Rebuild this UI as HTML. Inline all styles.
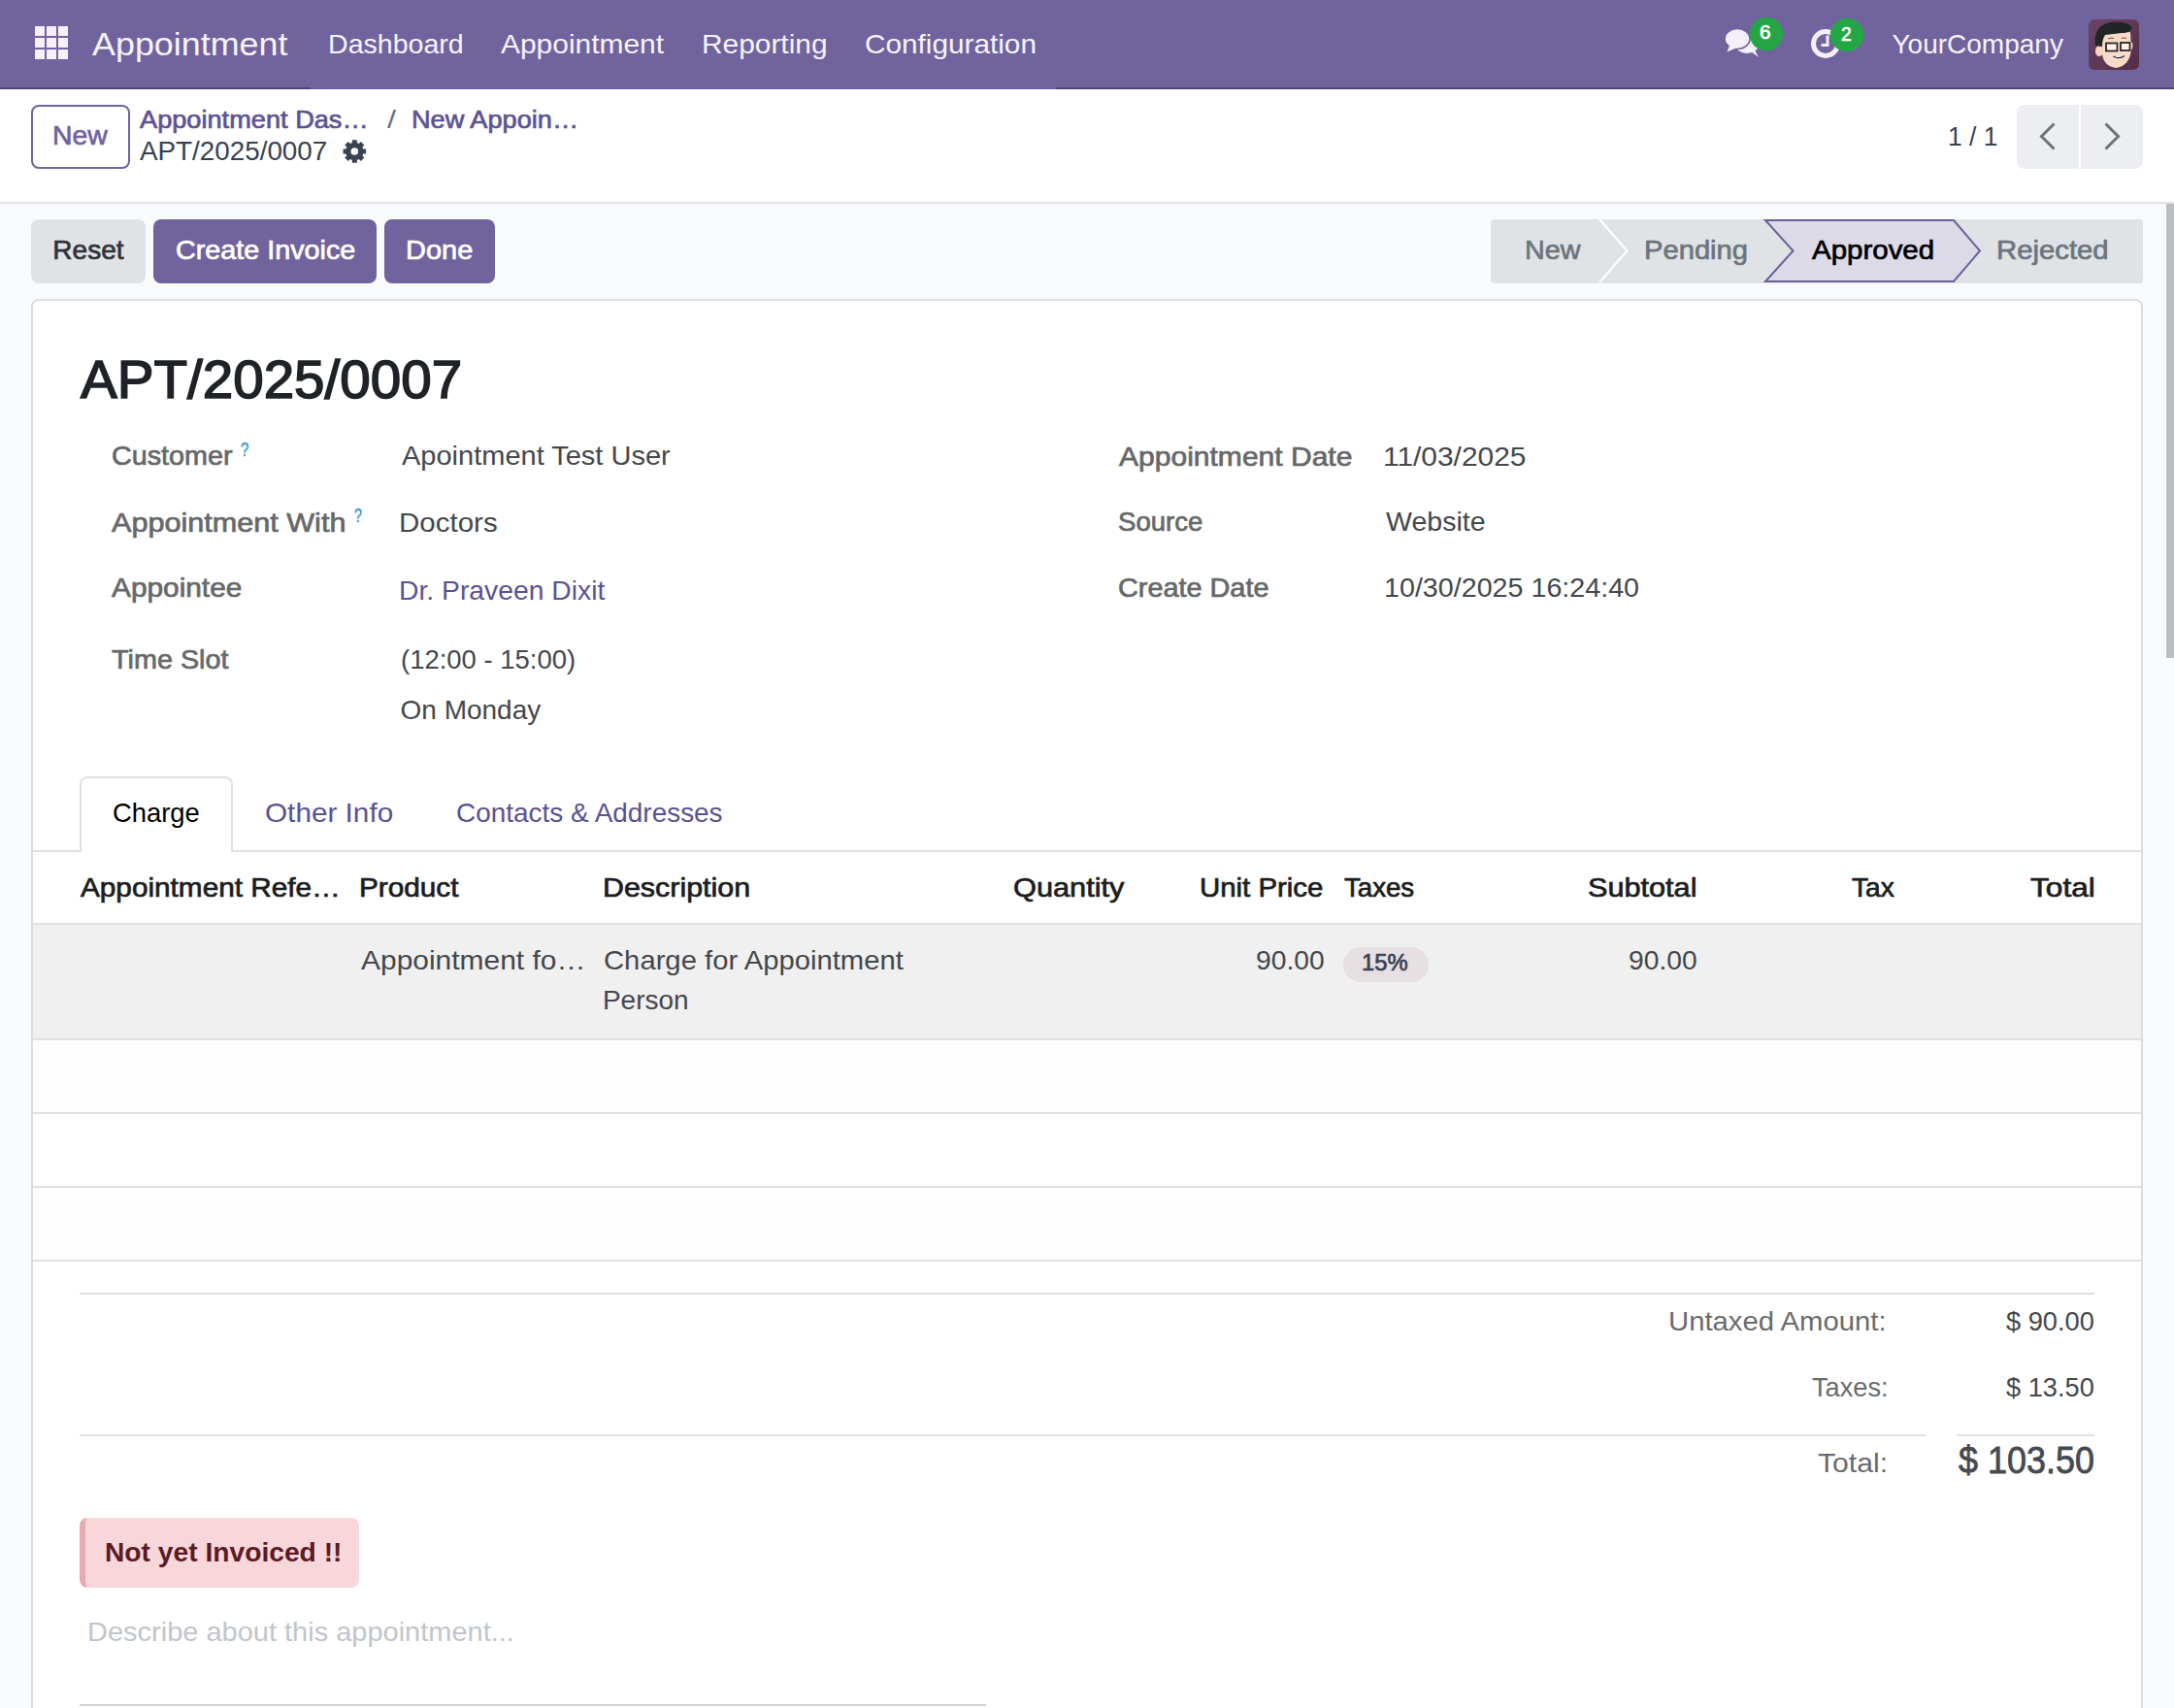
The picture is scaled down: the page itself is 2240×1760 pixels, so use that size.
<!DOCTYPE html>
<html><head><meta charset="utf-8"><title>Appointment</title>
<style>
html,body{margin:0;padding:0;}
body{width:2240px;height:1760px;overflow:hidden;position:relative;background:#f9fafb;font-family:"Liberation Sans",sans-serif;}
.a{position:absolute;box-sizing:border-box;}
@media (max-width:1300px){body{zoom:0.5;}}
.t{position:absolute;white-space:nowrap;line-height:1;transform-origin:0 0;}
</style></head><body>
<!-- navbar -->
<div class="a" style="left:0;top:0;width:2240px;height:92px;background:#71639e;"></div>
<div class="a" style="left:0;top:90px;width:320px;height:2px;background:#4f4670;"></div>
<div class="a" style="left:1088px;top:90px;width:1152px;height:2px;background:#4f4670;"></div>
<!-- control panel -->
<div class="a" style="left:0;top:92px;width:2240px;height:116px;background:#ffffff;"></div>
<div class="a" style="left:0;top:208px;width:2240px;height:2px;background:#e1e3e6;"></div>
<div class="a" style="left:32px;top:108px;width:102px;height:66px;border:2px solid #71639e;border-radius:8px;background:#fff;"></div>
<div class="a" style="left:2078px;top:108px;width:64px;height:66px;background:#eceef1;border-radius:8px 0 0 8px;"></div>
<div class="a" style="left:2144px;top:108px;width:64px;height:66px;background:#eceef1;border-radius:0 8px 8px 0;"></div>
<!-- action buttons -->
<div class="a" style="left:32px;top:226px;width:118px;height:66px;background:#e0e3e6;border-radius:8px;"></div>
<div class="a" style="left:158px;top:226px;width:230px;height:66px;background:#71639e;border-radius:8px;"></div>
<div class="a" style="left:396px;top:226px;width:114px;height:66px;background:#71639e;border-radius:8px;"></div>
<!-- statusbar -->
<div class="a" style="left:1536px;top:226px;width:672px;height:66px;background:#e0e3e6;border-radius:4px;"></div>
<!-- scrollbar -->
<div class="a" style="left:2232px;top:210px;width:8px;height:468px;background:#bdbec0;"></div>
<!-- sheet -->
<div class="a" style="left:32px;top:308px;width:2176px;height:1500px;background:#fff;border:2px solid #dcdddf;border-radius:8px;"></div>
<!-- tabs -->
<div class="a" style="left:34px;top:876px;width:2172px;height:2px;background:#dfe0e2;"></div>
<div class="a" style="left:82px;top:800px;width:158px;height:78px;border:2px solid #dfe0e2;border-bottom:none;border-radius:8px 8px 0 0;background:#fff;"></div>
<!-- table -->
<div class="a" style="left:34px;top:951px;width:2172px;height:2px;background:#dfe0e2;"></div>
<div class="a" style="left:34px;top:953px;width:2172px;height:117px;background:#f0f0f1;"></div>
<div class="a" style="left:34px;top:1070px;width:2172px;height:2px;background:#dfe0e2;"></div>
<div class="a" style="left:34px;top:1072px;width:2172px;height:74px;background:#fdfdfe;"></div>
<div class="a" style="left:34px;top:1146px;width:2172px;height:2px;background:#dfe0e2;"></div>
<div class="a" style="left:34px;top:1222px;width:2172px;height:2px;background:#dfe0e2;"></div>
<div class="a" style="left:34px;top:1224px;width:2172px;height:74px;background:#fdfdfe;"></div>
<div class="a" style="left:34px;top:1298px;width:2172px;height:2px;background:#dfe0e2;"></div>
<!-- tax pill -->
<div class="a" style="left:1384px;top:976px;width:88px;height:36px;background:#e6e0e2;border-radius:18px;"></div>
<!-- totals -->
<div class="a" style="left:82px;top:1332px;width:2076px;height:2px;background:#dfe0e2;"></div>
<div class="a" style="left:82px;top:1478px;width:1902px;height:2px;background:#dfe0e2;"></div>
<div class="a" style="left:2016px;top:1478px;width:142px;height:2px;background:#dfe0e2;"></div>
<!-- alert -->
<div class="a" style="left:82px;top:1564px;width:288px;height:72px;background:#f8d7da;border-radius:8px;border-left:6px solid #e9a9b0;"></div>
<div class="a" style="left:82px;top:1756px;width:934px;height:2px;background:#cfd1d4;"></div>
<svg class="a" style="left:0;top:0;" width="2240" height="1760" viewBox="0 0 2240 1760"><rect x="36" y="27" width="10" height="10" fill="#f4f1fa"/><rect x="36" y="39" width="10" height="10" fill="#f4f1fa"/><rect x="36" y="51" width="10" height="10" fill="#f4f1fa"/><rect x="48" y="27" width="10" height="10" fill="#f4f1fa"/><rect x="48" y="39" width="10" height="10" fill="#f4f1fa"/><rect x="48" y="51" width="10" height="10" fill="#f4f1fa"/><rect x="60" y="27" width="10" height="10" fill="#f4f1fa"/><rect x="60" y="39" width="10" height="10" fill="#f4f1fa"/><rect x="60" y="51" width="10" height="10" fill="#f4f1fa"/><path d="M362.80,147.15 L362.80,144.26 L367.80,144.26 L367.80,147.15 L368.32,147.31 L368.82,147.50 L369.31,147.72 L369.79,147.97 L371.83,145.93 L375.37,149.47 L373.33,151.51 L373.58,151.99 L373.80,152.48 L373.99,152.98 L374.15,153.50 L377.04,153.50 L377.04,158.50 L374.15,158.50 L373.99,159.02 L373.80,159.52 L373.58,160.01 L373.33,160.49 L375.37,162.53 L371.83,166.07 L369.79,164.03 L369.31,164.28 L368.82,164.50 L368.32,164.69 L367.80,164.85 L367.80,167.74 L362.80,167.74 L362.80,164.85 L362.28,164.69 L361.78,164.50 L361.29,164.28 L360.81,164.03 L358.77,166.07 L355.23,162.53 L357.27,160.49 L357.02,160.01 L356.80,159.52 L356.61,159.02 L356.45,158.50 L353.56,158.50 L353.56,153.50 L356.45,153.50 L356.61,152.98 L356.80,152.48 L357.02,151.99 L357.27,151.51 L355.23,149.47 L358.77,145.93 L360.81,147.97 L361.29,147.72 L361.78,147.50 L362.28,147.31 Z M369.1,156 A3.8,3.8 0 1,0 361.5,156 A3.8,3.8 0 1,0 369.1,156 Z" fill="#3b4250" fill-rule="evenodd"/><polyline points="2116.5,127.5 2103.5,140.5 2116.5,153.5" fill="none" stroke="#6f7378" stroke-width="3"/><polyline points="2169.5,127.5 2182.5,140.5 2169.5,153.5" fill="none" stroke="#6f7378" stroke-width="3"/><polyline points="1648,226 1676.5,258.5 1648,291" fill="none" stroke="#ffffff" stroke-width="2"/><polygon points="1819,227 2013,227 2040,258.5 2013,290 1819,290 1847.5,258.5" fill="#dddae8" stroke="#6b5f9a" stroke-width="2"/><ellipse cx="1800" cy="46" rx="12" ry="9" fill="#f3f0f8"/><polygon points="1800,50 1812,59 1806,48" fill="#f3f0f8"/><ellipse cx="1790" cy="40" rx="13" ry="10.5" fill="#f3f0f8" stroke="#71639e" stroke-width="1.6"/><polygon points="1782,47 1779.5,53.5 1790,49" fill="#f3f0f8"/><circle cx="1819.8" cy="35" r="17.3" fill="#24a646"/><circle cx="1881" cy="45" r="12.5" fill="none" stroke="#f3f0f8" stroke-width="5"/><path d="M1883,36.5 L1883,46.5 L1876.5,46.5" fill="none" stroke="#f3f0f8" stroke-width="3"/><circle cx="1903" cy="36" r="17.3" fill="#24a646"/><defs><linearGradient id="avg" x1="0" y1="0" x2="1" y2="1"><stop offset="0" stop-color="#6b4567"/><stop offset="1" stop-color="#552c47"/></linearGradient></defs><rect x="2152" y="20" width="52" height="52" rx="6" fill="url(#avg)"/><ellipse cx="2163" cy="52.5" rx="4" ry="5.5" fill="#f6d6c2"/><ellipse cx="2195.5" cy="47" rx="2" ry="4" fill="#f6d6c2"/><path d="M2165,35 L2195,33 L2196,50 Q2195,67 2181,70 Q2168,69 2166,56 Z" fill="#f8dbc8"/><path d="M2159,47 Q2156,27 2174,23 Q2190,21 2197,28 Q2195,34 2186,34 L2169,36 Q2166,41 2166,48 Z" fill="#222526"/><rect x="2170" y="44.5" width="11.5" height="8" fill="#fff5ee" stroke="#2a2623" stroke-width="1.8"/><rect x="2185" y="44" width="9.5" height="8" fill="#fff5ee" stroke="#2a2623" stroke-width="1.8"/><path d="M2172,40 Q2175,38.5 2178,39.5 M2186,39.5 Q2189,38.5 2191,39.5" fill="none" stroke="#6b4a3a" stroke-width="1"/><path d="M2177.5,58 Q2183,61.5 2189,57.5" fill="#ffffff" stroke="#2a2623" stroke-width="1.3"/></svg>
<div class="t" style="left:95.00px;top:27.92px;font-size:34px;color:#f6f4fa;transform:scaleX(1.0551);">Appointment</div>
<div class="t" style="left:337.56px;top:31.90px;font-size:28px;color:#f6f4fa;transform:scaleX(1.0202);">Dashboard</div>
<div class="t" style="left:516.20px;top:31.90px;font-size:28px;color:#f6f4fa;transform:scaleX(1.0690);">Appointment</div>
<div class="t" style="left:723.27px;top:31.90px;font-size:28px;color:#f6f4fa;transform:scaleX(1.0668);">Reporting</div>
<div class="t" style="left:891.24px;top:31.90px;font-size:28px;color:#f6f4fa;transform:scaleX(1.0623);">Configuration</div>
<div class="t" style="left:1949.50px;top:32.30px;font-size:28px;color:#f6f4fa;">YourCompany</div>
<div class="t" style="left:54.12px;top:126.10px;font-size:28px;color:#71639e;transform:scaleX(1.0129);-webkit-text-stroke:0.7px #71639e;">New</div>
<div class="t" style="left:144.05px;top:109.99px;font-size:26px;color:#5e5394;transform:scaleX(1.0452);-webkit-text-stroke:0.7px #5e5394;">Appointment Das…</div>
<div class="t" style="left:399.00px;top:109.99px;font-size:26px;color:#6b7280;transform:scaleX(1.2500);">/</div>
<div class="t" style="left:424.26px;top:109.99px;font-size:26px;color:#5e5394;transform:scaleX(1.0441);-webkit-text-stroke:0.7px #5e5394;">New Appoin…</div>
<div class="t" style="left:143.70px;top:142.10px;font-size:28px;color:#374151;transform:scaleX(0.9932);">APT/2025/0007</div>
<div class="t" style="left:2007.11px;top:126.60px;font-size:28px;color:#374151;transform:scaleX(0.9439);">1 / 1</div>
<div class="t" style="left:54.35px;top:244.10px;font-size:28px;color:#2f3337;-webkit-text-stroke:0.7px #2f3337;">Reset</div>
<div class="t" style="left:180.92px;top:244.30px;font-size:28px;color:#ffffff;transform:scaleX(1.0265);-webkit-text-stroke:0.7px #ffffff;">Create Invoice</div>
<div class="t" style="left:417.98px;top:244.30px;font-size:28px;color:#ffffff;transform:scaleX(1.0347);-webkit-text-stroke:0.7px #ffffff;">Done</div>
<div class="t" style="left:1571.29px;top:244.30px;font-size:28px;color:#6c757d;transform:scaleX(1.0275);-webkit-text-stroke:0.7px #6c757d;">New</div>
<div class="t" style="left:1694.27px;top:244.30px;font-size:28px;color:#6c757d;transform:scaleX(1.0415);-webkit-text-stroke:0.7px #6c757d;">Pending</div>
<div class="t" style="left:1866.95px;top:244.30px;font-size:28px;color:#000000;transform:scaleX(1.0525);-webkit-text-stroke:0.7px #000000;">Approved</div>
<div class="t" style="left:2057.26px;top:244.30px;font-size:28px;color:#6c757d;transform:scaleX(1.0464);-webkit-text-stroke:0.7px #6c757d;">Rejected</div>
<div class="t" style="left:83.10px;top:363.00px;font-size:56px;color:#1f2226;transform:scaleX(1.0102);-webkit-text-stroke:1.6px #1f2226;">APT/2025/0007</div>
<div class="t" style="left:114.52px;top:456.00px;font-size:28px;color:#666869;transform:scaleX(1.0263);-webkit-text-stroke:0.7px #666869;">Customer</div>
<div class="t" style="left:114.95px;top:524.50px;font-size:28px;color:#666869;transform:scaleX(1.0924);-webkit-text-stroke:0.7px #666869;">Appointment With</div>
<div class="t" style="left:114.95px;top:592.30px;font-size:28px;color:#666869;transform:scaleX(1.0650);-webkit-text-stroke:0.7px #666869;">Appointee</div>
<div class="t" style="left:114.95px;top:665.90px;font-size:28px;color:#666869;transform:scaleX(1.0278);-webkit-text-stroke:0.7px #666869;">Time Slot</div>
<div class="t" style="left:413.50px;top:456.30px;font-size:28px;color:#44474b;transform:scaleX(1.0357);">Apointment Test User</div>
<div class="t" style="left:411.39px;top:524.80px;font-size:28px;color:#44474b;transform:scaleX(1.0538);">Doctors</div>
<div class="t" style="left:411.48px;top:595.30px;font-size:28px;color:#5b5290;transform:scaleX(1.0106);">Dr. Praveen Dixit</div>
<div class="t" style="left:412.52px;top:665.90px;font-size:28px;color:#44474b;transform:scaleX(0.9810);">(12:00 - 15:00)</div>
<div class="t" style="left:412.50px;top:718.10px;font-size:28px;color:#44474b;">On Monday</div>
<div class="t" style="left:1152.85px;top:457.10px;font-size:28px;color:#666869;transform:scaleX(1.0726);-webkit-text-stroke:0.7px #666869;">Appointment Date</div>
<div class="t" style="left:1425.46px;top:457.10px;font-size:28px;color:#44474b;transform:scaleX(1.0680);">11/03/2025</div>
<div class="t" style="left:1151.87px;top:524.10px;font-size:28px;color:#666869;transform:scaleX(0.9846);-webkit-text-stroke:0.7px #666869;">Source</div>
<div class="t" style="left:1427.60px;top:524.10px;font-size:28px;color:#44474b;transform:scaleX(1.0193);">Website</div>
<div class="t" style="left:1151.82px;top:592.10px;font-size:28px;color:#666869;transform:scaleX(1.0295);-webkit-text-stroke:0.7px #666869;">Create Date</div>
<div class="t" style="left:1425.55px;top:592.10px;font-size:28px;color:#44474b;transform:scaleX(1.0238);">10/30/2025 16:24:40</div>
<div class="t" style="left:116.02px;top:824.40px;font-size:28px;color:#000000;transform:scaleX(0.9783);">Charge</div>
<div class="t" style="left:272.94px;top:824.40px;font-size:28px;color:#5b5290;transform:scaleX(1.0615);">Other Info</div>
<div class="t" style="left:470.40px;top:824.40px;font-size:28px;color:#5b5290;transform:scaleX(0.9967);">Contacts &amp; Addresses</div>
<div class="t" style="left:83.05px;top:900.60px;font-size:28px;color:#1b1d20;transform:scaleX(1.0621);-webkit-text-stroke:0.7px #1b1d20;">Appointment Refe…</div>
<div class="t" style="left:370.43px;top:900.60px;font-size:28px;color:#1b1d20;transform:scaleX(1.0621);-webkit-text-stroke:0.7px #1b1d20;">Product</div>
<div class="t" style="left:621.08px;top:900.60px;font-size:28px;color:#1b1d20;transform:scaleX(1.0859);-webkit-text-stroke:0.7px #1b1d20;">Description</div>
<div class="t" style="left:1044.25px;top:900.60px;font-size:28px;color:#1b1d20;transform:scaleX(1.0980);-webkit-text-stroke:0.7px #1b1d20;">Quantity</div>
<div class="t" style="left:1236.15px;top:900.60px;font-size:28px;color:#1b1d20;transform:scaleX(1.0497);-webkit-text-stroke:0.7px #1b1d20;">Unit Price</div>
<div class="t" style="left:1384.75px;top:900.60px;font-size:28px;color:#1b1d20;transform:scaleX(0.9869);-webkit-text-stroke:0.7px #1b1d20;">Taxes</div>
<div class="t" style="left:1636.36px;top:900.60px;font-size:28px;color:#1b1d20;transform:scaleX(1.0943);-webkit-text-stroke:0.7px #1b1d20;">Subtotal</div>
<div class="t" style="left:1908.35px;top:900.60px;font-size:28px;color:#1b1d20;transform:scaleX(1.0052);-webkit-text-stroke:0.7px #1b1d20;">Tax</div>
<div class="t" style="left:2092.05px;top:900.60px;font-size:28px;color:#1b1d20;transform:scaleX(1.1308);-webkit-text-stroke:0.7px #1b1d20;">Total</div>
<div class="t" style="left:372.20px;top:976.00px;font-size:28px;color:#44474b;transform:scaleX(1.0696);">Appointment fo…</div>
<div class="t" style="left:621.86px;top:976.00px;font-size:28px;color:#44474b;transform:scaleX(1.0442);">Charge for Appointment</div>
<div class="t" style="left:620.90px;top:1016.50px;font-size:28px;color:#44474b;">Person</div>
<div class="t" style="left:1293.89px;top:976.30px;font-size:28px;color:#44474b;transform:scaleX(1.0074);">90.00</div>
<div class="t" style="left:1403.36px;top:979.68px;font-size:24px;color:#374151;transform:scaleX(0.9915);-webkit-text-stroke:0.7px #374151;">15%</div>
<div class="t" style="left:1677.79px;top:976.30px;font-size:28px;color:#44474b;transform:scaleX(1.0074);">90.00</div>
<div class="t" style="left:1719.11px;top:1347.80px;font-size:28px;color:#6a6b6c;transform:scaleX(1.0458);">Untaxed Amount:</div>
<div class="t" style="left:2066.70px;top:1347.80px;font-size:28px;color:#44474b;transform:scaleX(0.9726);">$ 90.00</div>
<div class="t" style="left:1866.60px;top:1415.80px;font-size:28px;color:#6a6b6c;transform:scaleX(0.9716);">Taxes:</div>
<div class="t" style="left:2066.70px;top:1415.80px;font-size:28px;color:#44474b;transform:scaleX(0.9726);">$ 13.50</div>
<div class="t" style="left:1873.40px;top:1493.50px;font-size:28px;color:#6a6b6c;transform:scaleX(1.0761);">Total:</div>
<div class="t" style="left:2017.80px;top:1485.63px;font-size:38px;color:#454a50;transform:scaleX(0.9456);-webkit-text-stroke:0.8px #454a50;">$ 103.50</div>
<div class="t" style="left:107.69px;top:1586.00px;font-size:28px;color:#5c1a26;transform:scaleX(1.0072);font-weight:bold;">Not yet Invoiced !!</div>
<div class="t" style="left:89.93px;top:1667.90px;font-size:28px;color:#c2c5ca;transform:scaleX(1.0353);">Describe about this appointment...</div>
<div class="t" style="left:248.30px;top:453.27px;font-size:20px;color:#3d9fce;transform:scaleX(0.7455);-webkit-text-stroke:0.6px #3d9fce;">?</div>
<div class="t" style="left:364.50px;top:520.97px;font-size:20px;color:#3d9fce;transform:scaleX(0.7091);-webkit-text-stroke:0.6px #3d9fce;">?</div>
<div class="t" style="left:1813.36px;top:22.02px;font-size:21px;color:#ffffff;transform:scaleX(0.9900);-webkit-text-stroke:0.7px #ffffff;">6</div>
<div class="t" style="left:1897.33px;top:24.12px;font-size:21px;color:#ffffff;transform:scaleX(0.9200);-webkit-text-stroke:0.7px #ffffff;">2</div>
</body></html>
